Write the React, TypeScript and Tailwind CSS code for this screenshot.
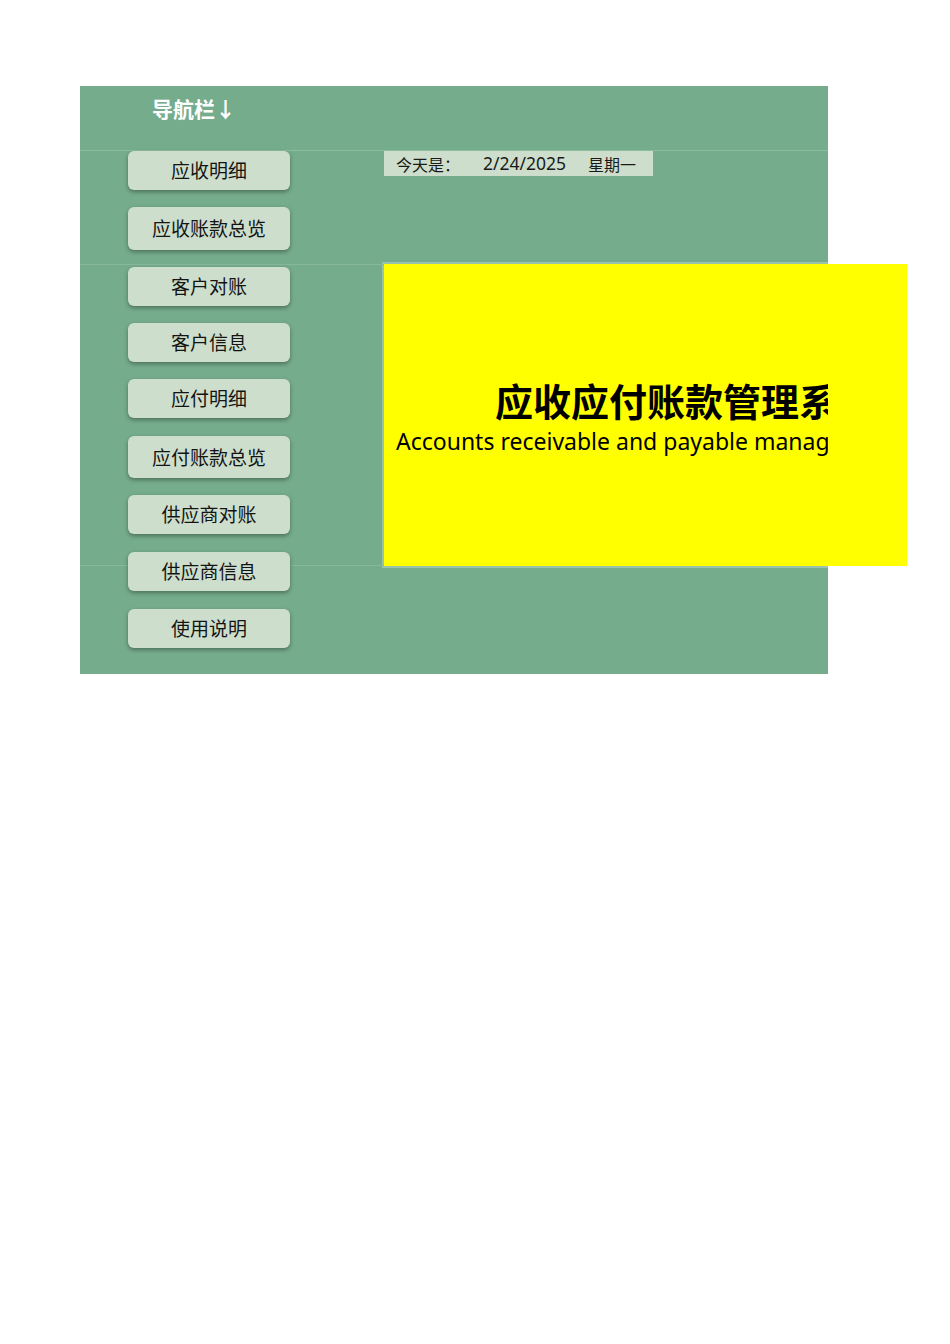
const navItems = [
  { label: "应收明细", cls: "h-[39px]" },
  { label: "应收账款总览", cls: "mt-[17px] h-[43px]" },
  { label: "客户对账", cls: "mt-[17px] h-[39px]" },
  { label: "客户信息", cls: "mt-[17px] h-[39px]" },
  { label: "应付明细", cls: "mt-[17px] h-[39px]" },
  { label: "应付账款总览", cls: "mt-[18px] h-[42px]" },
  { label: "供应商对账", cls: "mt-[17px] h-[39px]" },
  { label: "供应商信息", cls: "mt-[18px] h-[39px]" },
  { label: "使用说明", cls: "mt-[18px] h-[39px]" },
];

const NavButton = ({ label, cls }: { label: string; cls: string }) => (
  <button
    className={`${cls} flex w-[162px] items-center justify-center rounded-[6px] bg-[#cddfcc] text-[19px] text-[#141414] shadow-[0_2px_4px_rgba(0,0,0,0.35)]`}
  >
    {label}
  </button>
);

export default function App() {
  return (
    <div className="min-h-[1344px] bg-white pt-[86px] pl-[80px] font-['Noto_Sans_CJK_SC',sans-serif]">
      <div className="relative h-[588px] w-[748px] bg-[#75ac8c]">
        {/* sheet gridlines */}
        <div className="pointer-events-none absolute left-0 top-[178px] h-px w-[304px] bg-[#86b899]" />
        <div className="pointer-events-none absolute left-0 top-[479px] h-px w-[304px] bg-[#86b899]" />

        <div className="h-[65px] border-b border-[#8cbd9e] pl-[72px] pt-[5px]">
          <span className="text-[21px] font-bold leading-[34px] text-white">
            导航栏↓
          </span>
        </div>

        <div className="flex">
          <div className="relative flex w-[304px] shrink-0 flex-col pl-[48px]">
            {navItems.map((item) => (
              <NavButton key={item.label} label={item.label} cls={item.cls} />
            ))}
          </div>

          <div className="flex shrink-0 flex-col">
            <div className="flex h-[25px] w-[269px] items-center bg-[#cddfcc] pl-[12px] text-[16px] text-[#1a1a1a]">
              <span className="w-[87px]">今天是：</span>
              <span className="w-[105px] font-['Noto_Sans',sans-serif] text-[17.5px]">2/24/2025</span>
              <span>星期一</span>
            </div>

            <div className="mt-[88px] h-[302px] w-[523px] bg-[#ffff00] shadow-[0_0_0_2px_rgba(255,255,255,0.28)]">
              <div className="h-full w-[444px] overflow-hidden pt-[113px]">
                <div className="whitespace-nowrap pl-[111px] text-[38px] font-bold leading-[46px] text-black">
                  应收应付账款管理系统
                </div>
                <div className="mt-[3px] whitespace-nowrap pl-[12px] font-['Noto_Sans',sans-serif] text-[23px] leading-[30px] text-black">
                  Accounts receivable and payable management system
                </div>
              </div>
            </div>
          </div>
        </div>
      </div>
    </div>
  );
}
